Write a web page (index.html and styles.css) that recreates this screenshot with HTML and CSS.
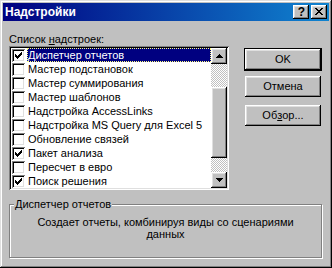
FILE: index.html
```html
<!DOCTYPE html>
<html lang="ru">
  <head>
    <meta charset="UTF-8" />
    <title>Надстройки</title>
    <link rel="stylesheet" href="styles.css">
  </head>
  <body>
    <div class="dialog">
      <!-- Title bar -->
      <div class="titlebar">
        <span class="title">Надстройки</span>
        <div class="caption-buttons">
          <div class="cap-btn help">?</div>
          <div class="cap-btn">
            <svg width="8" height="7" viewBox="0 0 8 7" shape-rendering="crispEdges">
              <path fill="#000" d="M0 0h2v1h-2z M6 0h2v1h-2z M1 1h2v1h-2z M5 1h2v1h-2z M2 2h4v1h-4z M3 3h2v1h-2z M2 4h4v1h-4z M1 5h2v1h-2z M5 5h2v1h-2z M0 6h2v1h-2z M6 6h2v1h-2z"/>
            </svg>
          </div>
        </div>
      </div>

      <div class="client">
        <div class="main">
          <!-- Add-in list -->
          <div class="list-col">
            <div class="label">Список <u>н</u>адстроек:</div>
            <div class="listbox">
              <ul class="items">
                <li class="item selected">
                  <span class="check checked"></span>
                  <span class="text">Диспетчер отчетов</span>
                </li>
                <li class="item">
                  <span class="check"></span>
                  <span class="text">Мастер подстановок</span>
                </li>
                <li class="item">
                  <span class="check"></span>
                  <span class="text">Мастер суммирования</span>
                </li>
                <li class="item">
                  <span class="check"></span>
                  <span class="text">Мастер шаблонов</span>
                </li>
                <li class="item">
                  <span class="check"></span>
                  <span class="text">Надстройка AccessLinks</span>
                </li>
                <li class="item">
                  <span class="check"></span>
                  <span class="text">Надстройка MS Query для Excel 5</span>
                </li>
                <li class="item">
                  <span class="check"></span>
                  <span class="text">Обновление связей</span>
                </li>
                <li class="item">
                  <span class="check checked"></span>
                  <span class="text">Пакет анализа</span>
                </li>
                <li class="item">
                  <span class="check"></span>
                  <span class="text">Пересчет в евро</span>
                </li>
                <li class="item">
                  <span class="check checked"></span>
                  <span class="text">Поиск решения</span>
                </li>
              </ul>
              <div class="scrollbar">
                <div class="sb-btn">
                  <svg width="7" height="4" viewBox="0 0 7 4" shape-rendering="crispEdges">
                    <path fill="#000" d="M3 0h1v1h1v1h1v1h1v1H0V3h1V2h1V1h1z"/>
                  </svg>
                </div>
                <div class="sb-track">
                  <div class="sb-thumb"></div>
                </div>
                <div class="sb-btn">
                  <svg width="7" height="4" viewBox="0 0 7 4" shape-rendering="crispEdges">
                    <path fill="#000" d="M0 0h7v1H6v1H5v1H4v1H3V3H2V2H1V1H0z"/>
                  </svg>
                </div>
              </div>
            </div>
          </div>

          <!-- Buttons -->
          <div class="button-col">
            <div class="btn default"><span>OK</span></div>
            <div class="btn cancel">Отмена</div>
            <div class="btn browse">Об<u>з</u>ор...</div>
          </div>
        </div>

        <!-- Description -->
        <div class="groupbox">
          <span class="legend">Диспетчер отчетов</span>
          <p class="description">Создает отчеты, комбинируя виды со сценариями данных</p>
        </div>
      </div>
    </div>
  </body>
</html>
```

FILE: styles.css
```css
/* Basic page styling */
* {
  box-sizing: border-box;
}

body {
  margin: 0;
  font-family: "Liberation Sans", Arial, sans-serif;
  font-size: 11px;
  color: #000;
}

u {
  text-decoration-thickness: 1px;
  text-underline-offset: 1px;
}

/* Window frame */
.dialog {
  width: 332px;
  height: 268px;
  padding: 3px;
  background: #c0c0c0;
  box-shadow: inset -1px -1px #000, inset 1px 1px #dfdfdf,
    inset -2px -2px #808080, inset 2px 2px #fff;
  display: flex;
  flex-direction: column;
}

/* Title bar */
.titlebar {
  height: 18px;
  display: flex;
  align-items: center;
  background: linear-gradient(to right, #000080, #1084d0);
}

.title {
  padding-left: 2px;
  color: #fff;
  font-weight: bold;
  font-size: 12px;
  line-height: 18px;
}

.caption-buttons {
  margin-left: auto;
  margin-right: 2px;
  display: flex;
  gap: 2px;
}

.cap-btn,
.sb-btn,
.sb-thumb,
.btn {
  background: #c0c0c0;
  box-shadow: inset -1px -1px #000, inset 1px 1px #fff,
    inset -2px -2px #808080, inset 2px 2px #dfdfdf;
}

.cap-btn {
  width: 16px;
  height: 14px;
  display: flex;
  align-items: center;
  justify-content: center;
  padding-bottom: 1px;
}

.cap-btn.help {
  font-weight: bold;
  font-size: 12px;
  line-height: 12px;
  padding: 0 0 0 1px;
}

/* Client area */
.client {
  flex: 1;
  padding: 11px 6px 0 6px;
}

.main {
  display: flex;
}

.list-col {
  width: 220px;
}

.label {
  line-height: 14px;
}

/* List box */
.listbox {
  width: 220px;
  height: 144px;
  padding: 2px;
  background: #fff;
  box-shadow: inset 1px 1px #808080, inset -1px -1px #fff,
    inset 2px 2px #000, inset -2px -2px #dfdfdf;
  display: flex;
}

.items {
  flex: 1;
  margin: 0;
  padding: 0;
  list-style: none;
  overflow: hidden;
}

.item {
  height: 14px;
  display: flex;
}

.check {
  width: 13px;
  height: 13px;
  margin: 1px 2px 0 1px;
  background: #fff;
  box-shadow: inset 1px 1px #808080, inset -1px -1px #fff,
    inset 2px 2px #000, inset -2px -2px #dfdfdf;
  display: flex;
  align-items: center;
  justify-content: center;
}

.check.checked::after {
  content: "";
  width: 7px;
  height: 7px;
  background: #000;
  clip-path: path("M0 2H1V3H2V4H3V3H4V2H5V1H6V0H7V3H6V4H5V5H4V6H3V7H2V6H1V5H0Z");
}

.text {
  flex: 1;
  padding-left: 1px;
  line-height: 14px;
  white-space: nowrap;
}

.item.selected .text {
  background: #000080;
  color: #fff;
  outline: 1px dotted #ffff80;
  outline-offset: -1px;
}

/* Scroll bar */
.scrollbar {
  width: 16px;
  display: flex;
  flex-direction: column;
}

.sb-btn {
  height: 16px;
  display: flex;
  align-items: center;
  justify-content: center;
}

.sb-track {
  flex: 1;
  background: repeating-conic-gradient(#c0c0c0 0 25%, #fff 0 50%) 0 0 / 2px 2px;
}

.sb-thumb {
  margin-top: 23px;
  height: 71px;
}

/* Buttons */
.button-col {
  margin-left: 15px;
  padding-top: 16px;
  width: 78px;
  display: flex;
  flex-direction: column;
  align-items: center;
}

.btn {
  width: 76px;
  height: 21px;
  display: flex;
  align-items: center;
  justify-content: center;
  line-height: 13px;
}

.btn.default {
  width: 78px;
  height: 23px;
  border: 1px solid #000;
}

.btn.cancel {
  margin-top: 5px;
}

.btn.browse {
  margin-top: 8px;
}

/* Description group */
.groupbox {
  position: relative;
  margin-top: 14px;
  width: 313px;
  height: 54px;
  border: 1px solid #808080;
  box-shadow: inset 1px 1px #fff, 1px 1px #fff;
}

.legend {
  position: absolute;
  top: -7px;
  left: 4px;
  padding: 0 1px;
  line-height: 13px;
  background: #c0c0c0;
}

.description {
  margin: 0;
  padding: 11px 14px 0;
  text-align: center;
  line-height: 12px;
}
```
